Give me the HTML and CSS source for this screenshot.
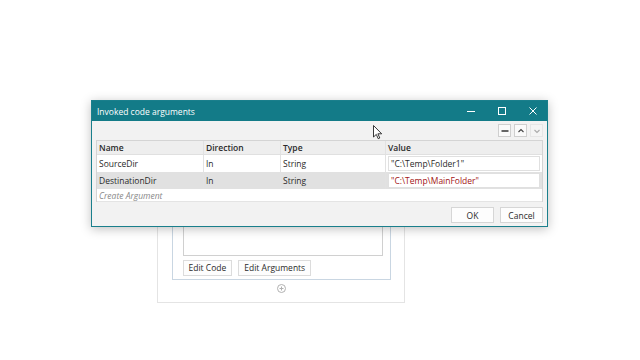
FILE: index.html
```html
<!DOCTYPE html>
<html lang="en">
<head>
    <meta charset="UTF-8">
    <title>Invoked code arguments</title>
    <link rel="stylesheet" href="styles.css">
</head>
<body>
    <div class="designer">
        <div class="activity">
            <div class="code-box"></div>
            <div class="activity-buttons">
                <button class="small-btn">Edit Code</button>
                <button class="small-btn">Edit Arguments</button>
            </div>
        </div>
        <div class="add-point">
            <svg width="9" height="9" viewBox="0 0 9 9"><circle cx="4.5" cy="4.5" r="4" fill="none" stroke="#b0b0b0"/><path d="M4.5 2.5v4M2.5 4.5h4" stroke="#b0b0b0"/></svg>
        </div>
    </div>

    <div class="dialog">
        <div class="title-bar">
            <span class="title">Invoked code arguments</span>
            <div class="win-controls">
                <svg width="8" height="8" viewBox="0 0 8 8"><path d="M0 4.5h8" stroke="#fff"/></svg>
                <svg width="8" height="8" viewBox="0 0 8 8"><rect x="0.5" y="0.5" width="7" height="7" fill="none" stroke="#fff"/></svg>
                <svg width="8" height="8" viewBox="0 0 8 8"><path d="M0.5 0.5l7 7M7.5 0.5l-7 7" stroke="#fff"/></svg>
            </div>
        </div>
        <div class="toolbar">
            <span class="tool-btn"><svg width="8" height="8" viewBox="0 0 8 8"><path d="M0.5 4h7" stroke="#333" stroke-width="1.5"/></svg></span>
            <span class="tool-btn"><svg width="8" height="8" viewBox="0 0 8 8"><path d="M1.5 5l2.5-2.5 2.5 2.5" fill="none" stroke="#444" stroke-width="1.1"/></svg></span>
            <span class="tool-btn disabled"><svg width="8" height="8" viewBox="0 0 8 8"><path d="M1.5 3l2.5 2.5 2.5-2.5" fill="none" stroke="#aaa" stroke-width="1.1"/></svg></span>
        </div>
        <div class="grid">
            <div class="row head">
                <div class="cell c-name">Name</div>
                <div class="cell c-dir">Direction</div>
                <div class="cell c-type">Type</div>
                <div class="cell c-val">Value</div>
            </div>
            <div class="row">
                <div class="cell c-name">SourceDir</div>
                <div class="cell c-dir">In</div>
                <div class="cell c-type">String</div>
                <div class="cell c-val"><span class="value-box">"C:\Temp\Folder1"</span></div>
            </div>
            <div class="row selected">
                <div class="cell c-name">DestinationDir</div>
                <div class="cell c-dir">In</div>
                <div class="cell c-type">String</div>
                <div class="cell c-val"><span class="value-box literal">"C:\Temp\MainFolder"</span></div>
            </div>
            <div class="row create">
                <div class="cell">Create Argument</div>
            </div>
        </div>
        <div class="footer">
            <button class="dlg-btn">OK</button>
            <button class="dlg-btn">Cancel</button>
        </div>
    </div>

    <svg class="cursor" width="10" height="15" viewBox="0 0 10 15"><path d="M0.5 0.5v11.5l2.8-2.6 1.9 4.3 1.6-0.7-1.9-4.2h3.8z" fill="#fff" stroke="#222" stroke-width="0.9"/></svg>
</body>
</html>
```

FILE: styles.css
```css
body {
    margin: 0;
    width: 640px;
    height: 360px;
    background: #fff;
    font-family: "Open Sans", "Noto Sans", sans-serif;
    font-size: 8.5px;
    color: #2a2a2a;
    overflow: hidden;
    position: relative;
}
.designer {
    margin: 190px 0 0 157px;
    width: 246px;
    height: 111px;
    border: 1px solid #e4e4e4;
    display: flex;
    flex-direction: column;
    align-items: center;
    justify-content: flex-end;
}
.activity {
    width: 219px;
    border: 1px solid #c9d6e2;
    border-top: none;
    padding: 0 10px 3px 10px;
    box-sizing: border-box;
    margin-bottom: 4px;
}
.code-box {
    width: 200px;
    height: 66px;
    border: 1px solid #d0d0d0;
    border-top: none;
    box-sizing: border-box;
}
.activity-buttons {
    display: flex;
    gap: 6px;
    margin-top: 4px;
}
.small-btn {
    font-family: inherit;
    font-size: 8.5px;
    color: #2a2a2a;
    background: #fdfdfd;
    border: 1px solid #dcdcdc;
    height: 16px;
    padding: 0 5px;
    line-height: 14px;
}
.add-point {
    height: 9px;
    margin-bottom: 9px;
}
.add-point svg {
    display: block;
}
.dialog {
    position: absolute;
    left: 91px;
    top: 100px;
    width: 457px;
    height: 127px;
    box-sizing: border-box;
    border: 1px solid #1a7f8c;
    background: #f2f2f2;
    box-shadow: 0 2px 10px rgba(0, 0, 0, 0.25);
    display: flex;
    flex-direction: column;
}
.title-bar {
    height: 20px;
    background: #137b88;
    color: #fff;
    display: flex;
    align-items: center;
    justify-content: space-between;
    padding-left: 5px;
    flex-shrink: 0;
}
.title {
    font-size: 8.5px;
}
.win-controls {
    display: flex;
    gap: 23px;
    padding-right: 10px;
}
.win-controls svg {
    display: block;
}
.toolbar {
    height: 19px;
    display: flex;
    justify-content: flex-end;
    align-items: center;
    gap: 3px;
    padding-right: 4px;
}
.tool-btn {
    width: 13px;
    height: 13px;
    box-sizing: border-box;
    border: 1px solid #cfcfcf;
    background: #fafafa;
    display: flex;
    align-items: center;
    justify-content: center;
}
.tool-btn.disabled {
    border-color: #e6e6e6;
    background: #f4f4f4;
}
.grid {
    margin: 0 4px;
    height: 62px;
    background: #fff;
    border: 1px solid #d4d4d4;
    box-sizing: border-box;
}
.row {
    display: flex;
    height: 17px;
    align-items: stretch;
}
.row.head {
    height: 13px;
    background: #eeeeee;
    font-weight: 600;
    border-bottom: 1px solid #e0e0e0;
}
.row.selected {
    background: #e1e1e1;
}
.row.create {
    height: 12px;
    color: #888;
    font-style: italic;
    border-bottom: 1px solid #e4e4e4;
}
.cell {
    padding-left: 2px;
    display: flex;
    align-items: center;
    box-sizing: border-box;
    white-space: nowrap;
}
.c-name { width: 107px; border-right: 1px solid #e2e2e2; }
.c-dir { width: 77px; border-right: 1px solid #e2e2e2; }
.c-type { width: 105px; border-right: 1px solid #e2e2e2; }
.c-val { flex: 1; padding: 1px 2px 1px 2px; }
.row.head .c-val { padding-left: 2px; }
.value-box {
    flex: 1;
    height: 100%;
    background: #fff;
    border: 1px solid #e0e0e0;
    box-sizing: border-box;
    display: flex;
    align-items: center;
    padding-left: 2px;
}
.value-box.literal {
    color: #a31515;
}
.footer {
    flex: 1;
    display: flex;
    justify-content: flex-end;
    align-items: center;
    gap: 6px;
    padding: 2px 4px 0 0;
}
.dlg-btn {
    font-family: inherit;
    font-size: 8.5px;
    color: #2a2a2a;
    width: 43px;
    height: 16px;
    padding: 0;
    background: #fdfdfd;
    border: 1px solid #d6d6d6;
}
.cursor {
    position: absolute;
    left: 373px;
    top: 125px;
}
```
